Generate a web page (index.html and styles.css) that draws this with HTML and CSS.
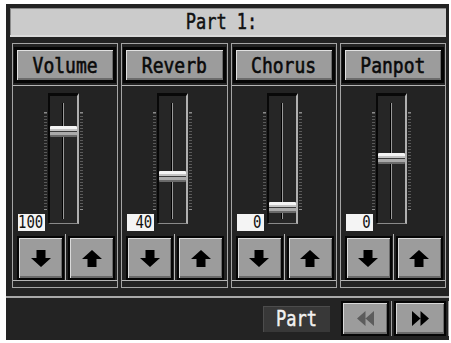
FILE: index.html
```html
<!DOCTYPE html>
<html lang="en">
<head>
    <meta charset="UTF-8">
    <meta name="viewport" content="width=device-width, initial-scale=1.0">
    <title>Part 1</title>
    <link rel="stylesheet" href="styles.css">
</head>
<body>

    <div class="screen">
        <div class="title"><span class="tall">Part 1:</span></div>

        <div class="panel">
            <!-- Volume -->
            <div class="col">
                <div class="name-cell"><div class="name-btn"><span class="tall">Volume</span></div></div>
                <div class="slider-area">
                    <div class="value"><span class="tall">100</span></div>
                    <div class="track">
                        <div class="groove"></div>
                        <div class="knob" style="top: 30px;"></div>
                    </div>
                </div>
                <div class="arrows">
                    <div class="arrow-cell"><div class="arrow-btn">
                        <svg width="20" height="17" viewBox="0 0 20 17"><path d="M5.5 0H14.5V8H20L10 17L0 8H5.5Z" fill="#000"/></svg>
                    </div></div>
                    <div class="arrow-cell"><div class="arrow-btn">
                        <svg width="20" height="17" viewBox="0 0 20 17"><path d="M5.5 17H14.5V9H20L10 0L0 9H5.5Z" fill="#000"/></svg>
                    </div></div>
                </div>
            </div>

            <!-- Reverb -->
            <div class="col">
                <div class="name-cell"><div class="name-btn"><span class="tall">Reverb</span></div></div>
                <div class="slider-area">
                    <div class="value"><span class="tall">40</span></div>
                    <div class="track">
                        <div class="groove"></div>
                        <div class="knob" style="top: 75px;"></div>
                    </div>
                </div>
                <div class="arrows">
                    <div class="arrow-cell"><div class="arrow-btn">
                        <svg width="20" height="17" viewBox="0 0 20 17"><path d="M5.5 0H14.5V8H20L10 17L0 8H5.5Z" fill="#000"/></svg>
                    </div></div>
                    <div class="arrow-cell"><div class="arrow-btn">
                        <svg width="20" height="17" viewBox="0 0 20 17"><path d="M5.5 17H14.5V9H20L10 0L0 9H5.5Z" fill="#000"/></svg>
                    </div></div>
                </div>
            </div>

            <!-- Chorus -->
            <div class="col">
                <div class="name-cell"><div class="name-btn"><span class="tall">Chorus</span></div></div>
                <div class="slider-area">
                    <div class="value"><span class="tall">0</span></div>
                    <div class="track">
                        <div class="groove"></div>
                        <div class="knob" style="top: 106px;"></div>
                    </div>
                </div>
                <div class="arrows">
                    <div class="arrow-cell"><div class="arrow-btn">
                        <svg width="20" height="17" viewBox="0 0 20 17"><path d="M5.5 0H14.5V8H20L10 17L0 8H5.5Z" fill="#000"/></svg>
                    </div></div>
                    <div class="arrow-cell"><div class="arrow-btn">
                        <svg width="20" height="17" viewBox="0 0 20 17"><path d="M5.5 17H14.5V9H20L10 0L0 9H5.5Z" fill="#000"/></svg>
                    </div></div>
                </div>
            </div>

            <!-- Panpot -->
            <div class="col">
                <div class="name-cell"><div class="name-btn"><span class="tall">Panpot</span></div></div>
                <div class="slider-area">
                    <div class="value"><span class="tall">0</span></div>
                    <div class="track">
                        <div class="groove"></div>
                        <div class="knob" style="top: 57px;"></div>
                    </div>
                </div>
                <div class="arrows">
                    <div class="arrow-cell"><div class="arrow-btn">
                        <svg width="20" height="17" viewBox="0 0 20 17"><path d="M5.5 0H14.5V8H20L10 17L0 8H5.5Z" fill="#000"/></svg>
                    </div></div>
                    <div class="arrow-cell"><div class="arrow-btn">
                        <svg width="20" height="17" viewBox="0 0 20 17"><path d="M5.5 17H14.5V9H20L10 0L0 9H5.5Z" fill="#000"/></svg>
                    </div></div>
                </div>
            </div>
        </div>

        <!-- Dolny pasek -->
        <div class="footer">
            <div class="part-btn"><span class="tall">Part</span></div>
            <div class="nav-btn prev">
                <svg width="17" height="15" viewBox="0 0 17 15"><path d="M17 0L8.5 7.5L17 15Z M8.5 0L0 7.5L8.5 15Z" fill="#5c5c5c"/></svg>
            </div>
            <div class="nav-btn next">
                <svg width="17" height="15" viewBox="0 0 17 15"><path d="M0 0L8.5 7.5L0 15Z M8.5 0L17 7.5L8.5 15Z" fill="#000"/></svg>
            </div>
        </div>
    </div>

</body>
</html>
```

FILE: styles.css
```css
body {
    margin: 0;
    background-color: #ffffff;
    font-family: "DejaVu Sans Mono", monospace;
}
.screen {
    margin: 4px 0 0 6px;
    width: 443px;
    height: 336px;
    background-color: #232323;
    display: flex;
    flex-direction: column;
}
.tall {
    display: inline-block;
    transform: scaleY(1.22);
}
.title {
    margin: 4px 3px 0 4px;
    height: 27px;
    padding-right: 13px;
    background-color: #cbcbcb;
    border-bottom: 2px solid #dadada;
    box-shadow: inset 1px 1px 0 #8a8a8a;
    display: flex;
    align-items: center;
    justify-content: center;
    color: #111;
    font-size: 17px;
    -webkit-text-stroke: 0.4px #111;
}
.panel {
    display: grid;
    grid-template-columns: repeat(4, 1fr);
    gap: 3px;
    padding: 6px 3px 8px 6px;
    border-bottom: 2px solid #a9a9a9;
}
.col {
    border: 1px solid #a5a5a5;
    display: flex;
    flex-direction: column;
    padding-bottom: 6px;
}
.name-cell {
    padding: 3px 1px 2px;
    border-bottom: 1px solid #b5b5b5;
}
.name-btn {
    height: 30px;
    border: 3px solid #050505;
    background-color: #9c9c9c;
    box-shadow: inset 1px 1px 0 #e0e0e0, inset -1px -2px 0 #6c6c6c;
    display: flex;
    align-items: center;
    justify-content: center;
    color: #0a0a0a;
    font-size: 18px;
    -webkit-text-stroke: 0.5px #0a0a0a;
}
.slider-area {
    display: flex;
    align-items: flex-end;
    gap: 3px;
    padding: 7px 0 3px 5px;
}
.value {
    width: 27px;
    height: 17px;
    box-sizing: border-box;
    padding-right: 2px;
    background-color: #f4f4f4;
    color: #111;
    font-size: 14px;
    line-height: 17px;
    text-align: right;
}
.track {
    position: relative;
    width: 27px;
    height: 127px;
    margin-bottom: 7px;
    background-color: #262626;
    border-style: solid;
    border-width: 3px 2px 1px 2px;
    border-color: #080808 #b0b0b0 #8a8a8a #080808;
}
.track::before,
.track::after {
    content: "";
    position: absolute;
    top: 16px;
    bottom: 13px;
    width: 3px;
    border-top: 1px solid #8a8a8a;
    border-bottom: 1px solid #8a8a8a;
    background: repeating-linear-gradient(#5a5a5a 0 1px, transparent 1px 3px);
}
.track::before {
    left: -6px;
}
.track::after {
    right: -6px;
}
.groove {
    position: absolute;
    top: 7px;
    bottom: 4px;
    left: 12px;
    width: 1px;
    background-color: #9a9a9a;
    border-left: 1px solid #000;
}
.knob {
    position: absolute;
    left: 0;
    width: 27px;
    height: 11px;
    border-radius: 1px;
    background: linear-gradient(#f4f4f4 0 3px, #c4c4c4 3px 5px, #3a3a3a 5px 6px, #aaaaaa 6px 9px, #6a6a6a 9px);
}
.arrows {
    display: flex;
}
.arrow-cell {
    padding: 2px 1px 0 4px;
    border-right: 1px solid #b5b5b5;
    border-bottom: 1px solid #b5b5b5;
}
.arrow-cell + .arrow-cell {
    flex: 1;
    padding-left: 2px;
    border-right: none;
}
.arrow-btn {
    width: 43px;
    height: 40px;
    border: 2px solid #050505;
    background-color: #9c9c9c;
    box-shadow: inset 1px 1px 0 #dadada, inset -1px -2px 0 #6a6a6a;
    display: flex;
    align-items: center;
    justify-content: center;
}
.footer {
    flex: 1;
    display: flex;
    align-items: center;
    justify-content: flex-end;
    gap: 5px;
    padding: 1px 3px 2px 0;
}
.part-btn {
    width: 67px;
    height: 26px;
    margin-right: 6px;
    background-color: #383838;
    box-shadow: inset 1px 1px 0 #4c4c4c;
    display: flex;
    align-items: center;
    justify-content: center;
    color: #f2f2f2;
    font-size: 17px;
    -webkit-text-stroke: 0.4px #f2f2f2;
}
.nav-btn {
    width: 44px;
    height: 31px;
    border: 2px solid #050505;
    background-color: #9c9c9c;
    box-shadow: inset 1px 1px 0 #d8d8d8, inset -1px -2px 0 #6a6a6a, 2px 0 0 #232323, 3px 0 0 #a0a0a0;
    display: flex;
    align-items: center;
    justify-content: center;
}
.nav-btn.next {
    width: 48px;
}
```
